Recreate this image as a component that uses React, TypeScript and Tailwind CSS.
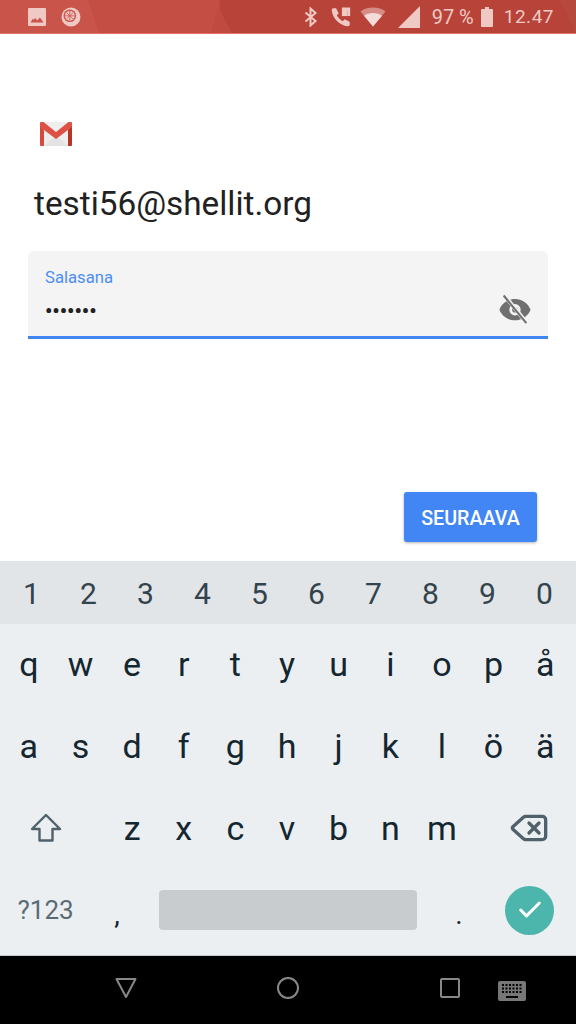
import { Check, Delete } from 'lucide-react';

const DIGITS = ['1', '2', '3', '4', '5', '6', '7', '8', '9', '0'];
const ROW_1 = ['q', 'w', 'e', 'r', 't', 'y', 'u', 'i', 'o', 'p', 'å'];
const ROW_2 = ['a', 's', 'd', 'f', 'g', 'h', 'j', 'k', 'l', 'ö', 'ä'];
const ROW_3 = ['z', 'x', 'c', 'v', 'b', 'n', 'm'];

function Key({ label }: { label: string }) {
  return <div className="flex items-center justify-center text-[34px] leading-none text-[#14262f]">{label}</div>;
}

function StatusBar() {
  return (
    <div className="relative h-[34px] shrink-0 overflow-hidden border-b border-[#e2746b] bg-[#c44e44]">
      {/* faceted wallpaper behind the icons */}
      <svg className="absolute inset-0" width="576" height="33" viewBox="0 0 576 33">
        <polygon points="0,0 88,0 99,33 0,33" fill="#c9544a" />
        <polygon points="220,0 576,0 576,33 232,33 220,10" fill="#b84338" />
        <polygon points="220,0 211,33 232,33 220,10" fill="#c04a40" />
        <polygon points="560,0 576,0 576,33" fill="#b5493e" />
      </svg>
      <div className="relative flex h-full items-center px-[27px] text-[#f0c9c5]">
        <svg width="20" height="20" viewBox="0 0 20 20" fill="currentColor" className="mr-[14px] shrink-0">
          <path fillRule="evenodd" d="M2 1h16a1 1 0 0 1 1 1v16a1 1 0 0 1-1 1H2a1 1 0 0 1-1-1V2a1 1 0 0 1 1-1Zm1.500 14.500h13l-3.600-5-2.600 3-2.100-2.600-1.400 1.800-1-.9Z" />
        </svg>
        <svg width="20" height="20" viewBox="0 0 20 20" className="shrink-0">
          <circle cx="10" cy="10" r="9.500" fill="currentColor" />
          <circle cx="8.800" cy="8.800" r="6.300" fill="#c9544a" />
          <circle cx="8.800" cy="8.800" r="4.900" fill="currentColor" />
          <path d="M8.800 4v9.600M4 8.800h9.600M5.400 5.400l6.800 6.800M12.200 5.400l-6.800 6.800" stroke="#c9544a" strokeWidth="0.800" />
        </svg>
        <div className="ml-auto flex items-center">
          <svg width="14" height="20" viewBox="0 0 14 20" fill="none" stroke="currentColor" strokeWidth="2" className="shrink-0">
            <path d="M1.500 5.500 11.500 14 6.500 18.500V1.500L11.500 6 1.500 14.500" />
          </svg>
          <svg width="22" height="22" viewBox="0 0 24 24" fill="currentColor" className="ml-[12px] shrink-0">
            <path d="M6.600 2.500 9.500 8 7.500 10.200c1.200 2.600 3.600 5 6.300 6.300l2.200-2 5.500 2.800v2.900c0 1.200-1 2-2.100 1.900C10.500 21.300 2.700 13.500 1.900 4.600 1.800 3.500 2.600 2.500 3.800 2.500Z" />
            <path d="M13 1.500h9V11h-3V4.500h-6Z" />
            <path d="M13 4h6v7h-6Z" />
          </svg>
          <svg width="26" height="20" viewBox="0 0 26 20" className="ml-[8px] shrink-0">
            <path d="M0.500 4.500C3.500 2 8 0.500 13 0.500s9.500 1.500 12.500 4L13 19.500Z" fill="currentColor" fillOpacity="0.55" />
            <path d="M4 8.700C6.500 7 9.500 6 13 6s6.500 1 9 2.700L13 19.500Z" fill="#f6dcd9" />
          </svg>
          <svg width="22" height="22" viewBox="0 0 22 22" fill="currentColor" className="ml-[12px] shrink-0">
            <path d="M22 0v22H0Z" />
          </svg>
          <span className="ml-[12px] text-[20px] leading-none">97 %</span>
          <svg width="12" height="20" viewBox="0 0 12 20" fill="currentColor" className="ml-[7px] shrink-0">
            <path d="M4 0h4v2h3a1 1 0 0 1 1 1v16a1 1 0 0 1-1 1H1a1 1 0 0 1-1-1V3a1 1 0 0 1 1-1h3Z" />
          </svg>
          <span className="ml-[11px] mr-[-5px] text-[19px] leading-none tracking-[0.5px]">12.47</span>
        </div>
      </div>
    </div>
  );
}

function GmailLogo() {
  return (
    <svg width="32" height="24" viewBox="0 0 32 24" className="shrink-0">
      <path d="M1 0h30a1 1 0 0 1 1 1v22a1 1 0 0 1-1 1H1a1 1 0 0 1-1-1V1a1 1 0 0 1 1-1Z" fill="#eeeeee" />
      <path d="M4 24 16 13l12 11Z" fill="#e3e3e3" />
      <path d="M0 1v22a1 1 0 0 0 1 1h3V8Z" fill="#d54c3f" />
      <path d="M32 1v22a1 1 0 0 1-1 1h-3V8Z" fill="#b63524" />
      <path d="M0 0.500 1 0h2.500L16 10 28.500 0H31l1 .500V5L16 17 0 5Z" fill="#de5145" />
    </svg>
  );
}

function PasswordField() {
  return (
    <div className="mx-[28px] mt-[27px] flex h-[88px] shrink-0 flex-col rounded-t-[6px] border-b-[3px] border-[#4285f4] bg-[#f4f4f4] pl-[17px] pr-[16px]">
      <div className="mt-[17px] text-[16.700px] leading-[20px] text-[#4d8ef5]">Salasana</div>
      <div className="mt-[4px] flex h-[34px] items-center justify-between">
        <span className="pt-[3px] text-[20.500px] font-bold leading-[24px] text-[#222222]">•••••••</span>
        <svg width="34" height="34" viewBox="0 0 24 24" fill="#707070" className="shrink-0">
          <path fillRule="evenodd" d="M12 5c5 0 9.300 3.100 11 7.500C21.300 16.900 17 20 12 20S2.700 16.900 1 12.500C2.700 8.100 7 5 12 5Zm0 3.500a4 4 0 1 0 0 8 4 4 0 0 0 0-8Z" />
          <circle cx="12" cy="12.500" r="2" />
          <path d="M4.500 2.500 20.500 22" stroke="#f4f4f4" strokeWidth="2.800" />
          <path d="M4 2.500 20 22" stroke="#707070" strokeWidth="1.500" />
        </svg>
      </div>
    </div>
  );
}

function Keyboard() {
  return (
    <div className="shrink-0 bg-[#eceff1]">
      <div className="grid h-[63px] grid-cols-10 bg-[#e1e5e8] px-[3px] pt-[2px]">
        {DIGITS.map((d) => (
          <div key={d} className="flex items-center justify-center text-[30px] leading-none text-[#33434c]">{d}</div>
        ))}
      </div>
      <div className="grid h-[82px] grid-cols-11 pl-[3px] pr-[5px] pb-[3px]">
        {ROW_1.map((k) => <Key key={k} label={k} />)}
      </div>
      <div className="grid h-[82px] grid-cols-11 pl-[3px] pr-[5px] pb-[3px]">
        {ROW_2.map((k) => <Key key={k} label={k} />)}
      </div>
      <div className="grid h-[82px] grid-cols-11 pl-[3px] pr-[5px] pb-[2px]">
        <div className="col-span-2 flex items-center justify-center pr-[17px]">
          <svg width="32" height="30" viewBox="0 0 32 30" fill="none" stroke="#4f626c" strokeWidth="2.400" strokeLinejoin="round">
            <path d="M16 2 2 16h7.500v11.500h13V16H30Z" />
          </svg>
        </div>
        {ROW_3.map((k) => <Key key={k} label={k} />)}
        <div className="col-span-2 flex items-center justify-center pl-[19px]">
          <Delete size={40} strokeWidth={2} className="text-[#4f626c]" />
        </div>
      </div>
      <div className="grid h-[86px] grid-cols-11 items-center border-b border-[#c8c8c8] px-[4px] pb-[5px]">
        <div className="col-span-2 pr-[20px] text-center text-[26px] leading-none text-[#5a6b74]">?123</div>
        <div className="flex justify-center pr-[32px] pt-[10px] text-[28px] leading-none text-[#14262f]">,</div>
        <div className="col-span-5 h-[40px] rounded-[4px] bg-[#c8ccce]" />
        <div className="flex justify-center pl-[32px] pt-[10px] text-[28px] leading-none text-[#14262f]">.</div>
        <div className="col-span-2 flex justify-end pr-[18px]">
          <div className="flex h-[49px] w-[49px] items-center justify-center rounded-full bg-[#4db6ac]">
            <Check size={28} strokeWidth={2.600} color="#ffffff" />
          </div>
        </div>
      </div>
    </div>
  );
}

function NavBar() {
  return (
    <div className="flex h-[68px] shrink-0 items-center bg-black pb-[4px]">
      <svg width="24" height="22" viewBox="0 0 24 22" fill="none" stroke="#888888" strokeWidth="2" strokeLinejoin="round" className="ml-[114px]">
        <path d="M2.500 2h19L12 20Z" />
      </svg>
      <svg width="24" height="24" viewBox="0 0 24 24" fill="none" stroke="#888888" strokeWidth="2" className="ml-[138px]">
        <circle cx="12" cy="12" r="10" />
      </svg>
      <svg width="20" height="20" viewBox="0 0 20 20" fill="none" stroke="#888888" strokeWidth="2" className="ml-[140px]">
        <rect x="1" y="1" width="18" height="18" rx="1" />
      </svg>
      <svg width="28" height="20" viewBox="0 0 28 20" className="ml-[38px] mt-[6px]">
        <rect width="28" height="20" rx="2" fill="#777777" />
        <path d="M4 4h20M4 7.500h20" stroke="#000000" strokeWidth="2" strokeDasharray="2 1.500" />
        <path d="M4 11h20" stroke="#000000" strokeWidth="2" strokeDasharray="2 1.500" />
        <rect x="8" y="15" width="12" height="2" fill="#000000" />
      </svg>
    </div>
  );
}

export default function App() {
  return (
    <div className="flex h-[1024px] w-[576px] flex-col overflow-hidden bg-white font-['Roboto',sans-serif]">
      <StatusBar />
      <div className="relative flex flex-1 flex-col">
        <div className="ml-[40px] mt-[88px]">
          <GmailLogo />
        </div>
        <div className="ml-[34px] mt-[38px] h-[40px] text-[33.300px] leading-[40px] text-[#212121]">testi56@shellit.org</div>
        <PasswordField />
        <div className="mr-[39px] mt-auto mb-[19px] flex justify-end">
          <button className="h-[50px] w-[133px] rounded-[3px] bg-[#4285f4] pt-[3px] text-[19.700px] font-medium text-white shadow-[0_1px_3px_rgba(0,0,0,0.3)]">SEURAAVA</button>
        </div>
      </div>
      <Keyboard />
      <NavBar />
    </div>
  );
}
